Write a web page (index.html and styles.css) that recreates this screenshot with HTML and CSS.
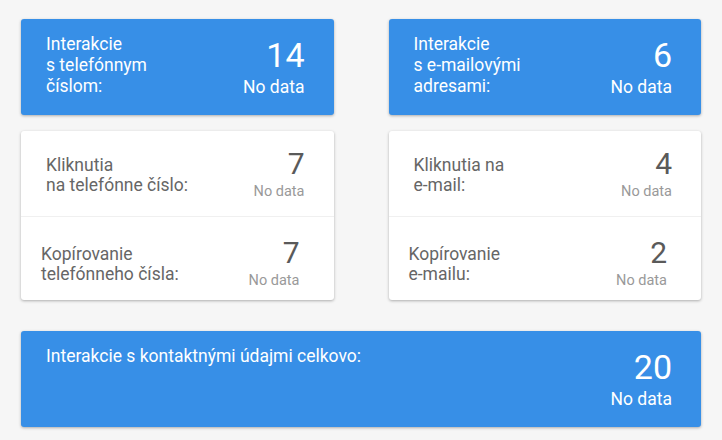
FILE: index.html
```html
<!DOCTYPE html>
<html lang="sk">
<head>
  <meta charset="UTF-8">
  <title>Interakcie s kontaktnými údajmi</title>
  <meta name="viewport" content="width=device-width, initial-scale=1">
  <link rel="stylesheet" href="styles.css">
</head>
<body>

  <div class="board">

    <!-- Phone column -->
    <div class="column">
      <div class="card card-blue">
        <div class="card-title">Interakcie<br>s telefónnym<br>číslom:</div>
        <div class="card-value">
          <div class="value-big">14</div>
          <div class="value-note">No data</div>
        </div>
      </div>

      <div class="card card-white">
        <div class="stat-row">
          <div class="stat-label">Kliknutia<br>na telefónne číslo:</div>
          <div class="stat-value">
            <div class="stat-num">7</div>
            <div class="stat-note">No data</div>
          </div>
        </div>
        <div class="stat-row stat-row-second">
          <div class="stat-label">Kopírovanie<br>telefónneho čísla:</div>
          <div class="stat-value">
            <div class="stat-num">7</div>
            <div class="stat-note">No data</div>
          </div>
        </div>
      </div>
    </div>

    <!-- E-mail column -->
    <div class="column">
      <div class="card card-blue">
        <div class="card-title">Interakcie<br>s e-mailovými<br>adresami:</div>
        <div class="card-value">
          <div class="value-big">6</div>
          <div class="value-note">No data</div>
        </div>
      </div>

      <div class="card card-white">
        <div class="stat-row">
          <div class="stat-label">Kliknutia na<br>e-mail:</div>
          <div class="stat-value">
            <div class="stat-num">4</div>
            <div class="stat-note">No data</div>
          </div>
        </div>
        <div class="stat-row stat-row-second">
          <div class="stat-label">Kopírovanie<br>e-mailu:</div>
          <div class="stat-value">
            <div class="stat-num">2</div>
            <div class="stat-note">No data</div>
          </div>
        </div>
      </div>
    </div>

    <!-- Total -->
    <div class="card card-blue card-total">
      <div class="card-title">Interakcie s kontaktnými údajmi celkovo:</div>
      <div class="card-value">
        <div class="value-big">20</div>
        <div class="value-note">No data</div>
      </div>
    </div>

  </div>

</body>
</html>
```

FILE: styles.css
```css
:root {
  --blue: #378fe7;
  --page-bg: #f6f6f6;
  --label-gray: #666666;
  --num-gray: #5a5a5a;
  --note-gray: #999999;
}

* {
  box-sizing: border-box;
}

body {
  margin: 0;
  font-family: Roboto, 'Liberation Sans', sans-serif;
  background: var(--page-bg);
}

.board {
  display: grid;
  grid-template-columns: 1fr 1fr;
  column-gap: 55px;
  row-gap: 31px;
  padding: 19px 21px;
}

.column {
  display: flex;
  flex-direction: column;
  gap: 16px;
}

.card {
  border-radius: 3px;
  box-shadow: 0 1px 3px rgba(0,0,0,0.3);
}

/* Blue summary cards */
.card-blue {
  background: var(--blue);
  color: #fff;
  height: 96px;
  display: flex;
  justify-content: space-between;
  align-items: flex-start;
  padding: 15px 29px 0 25px;
}

.card-total {
  grid-column: 1 / 3;
}

.card-title {
  font-size: 17.5px;
  line-height: 21px;
}

.card-value {
  text-align: right;
}

.value-big {
  font-size: 34px;
  line-height: 34px;
  margin-top: 4px;
}

.value-note {
  font-size: 17.5px;
  line-height: 20px;
  margin-top: 5px;
}

/* White detail cards */
.card-white {
  background: #fff;
  display: flex;
  flex-direction: column;
}

.stat-row {
  height: 86px;
  display: flex;
  justify-content: space-between;
  align-items: flex-start;
  padding: 18px 29px 0 25px;
  border-bottom: 1px solid #f0f0f0;
}

.stat-row-second {
  height: 83px;
  padding: 21px 34px 0 20px;
  border-bottom: none;
}

.stat-label {
  font-size: 17.5px;
  line-height: 20px;
  color: var(--label-gray);
  margin-top: 6px;
}

.stat-value {
  text-align: right;
}

.stat-num {
  font-size: 30px;
  line-height: 30px;
  color: var(--num-gray);
}

.stat-note {
  font-size: 14.5px;
  line-height: 18px;
  color: var(--note-gray);
  margin-top: 4px;
}
```
